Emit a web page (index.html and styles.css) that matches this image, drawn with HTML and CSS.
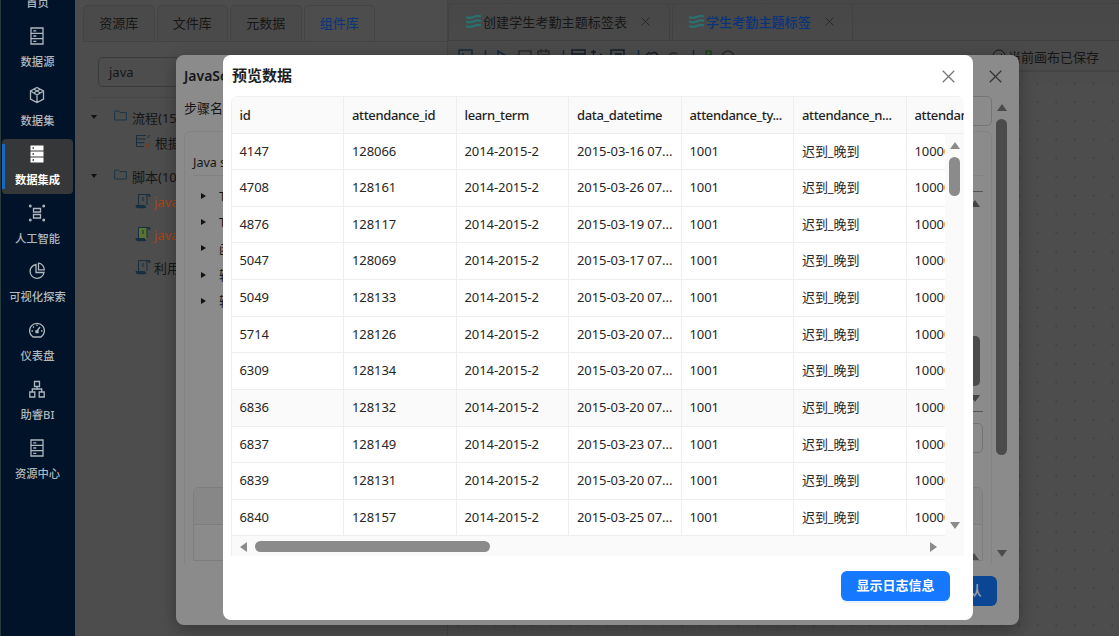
FILE: index.html
```html
<!DOCTYPE html>
<html>
	<head>
		<meta charset="UTF-8">
		<title>数据集成</title>
		<link rel="stylesheet" href="styles.css">
	</head>
	<body>
		<svg class="defs">
			<symbol id="i-server" viewBox="0 0 16 18"><path d="M2 1h12v16H2zM2 6.3h12M2 11.6h12M4.3 3.8h3M4.3 9h3M4.3 14.3h3"/></symbol>
			<symbol id="i-close" viewBox="0 0 12 12"><path d="M.7.7l10.6 10.6M11.3.7L.7 11.3"/></symbol>
			<symbol id="i-folder" viewBox="0 0 13 11"><path d="M.6 1h4l1.5 1.6h6.3V10H.6z"/></symbol>
			<symbol id="i-wave" viewBox="0 0 17 13"><path d="M1 2q3.500 1.800 7.500 0t7.500-.5M1 6.500q3.500 1.800 7.500 0t7.500-.5M1 11q3.500 1.800 7.500 0t7.500-.5"/></symbol>
			<symbol id="i-script" viewBox="0 0 16 16"><path class="paper" d="M4 1h8v12H4z"/><path class="line" d="M3.500 12V1.500h8.500V12M8 4v4"/><path class="roll" d="M11.500 1h3q1.300.8 1 3h-1.500l-.5-1.500h-2zM.5 12h9l2 2.500q-1 .8-2 .8H3Q.8 15.200.5 12z"/></symbol>
		</svg>
		<div class="sidebar">
			<ul>
				<li><svg><use href="#i-server"/></svg><span>首页</span></li>
				<li><svg viewBox="0 0 16 18"><use href="#i-server"/></svg><span>数据源</span></li>
				<li><svg viewBox="0 0 16 18"><path d="M8 1.500l6.500 3.500v8L8 16.500 1.500 13V5zM1.500 5L8 9l6.500-4M8 9v7.500M5 3.300l6 3.500M11 3.300L5 6.800"/></svg><span>数据集</span></li>
				<li class="select"><svg viewBox="0 0 16 18"><path class="solid" d="M1.500.5h13v5h-13zM1.500 6.500h13v5h-13zM1.500 12.500h13v5h-13z"/><path class="dots" d="M3.500 3h1.500M3.500 9h1.500M3.500 15h1.500"/></svg><span>数据集成</span></li>
				<li><svg viewBox="0 0 16 18"><path d="M4.500 4.500h7v3.500h-7zM4.500 10.500h7V14h-7z"/><circle cx="1.200" cy="2" r=".9"/><circle cx="14.800" cy="2" r=".9"/><circle cx="1.200" cy="16" r=".9"/><circle cx="14.800" cy="16" r=".9"/></svg><span>人工智能</span></li>
				<li><svg viewBox="0 0 16 18"><path d="M7 2.500a7 7 0 1 0 8 8H7zM9.500 1.200v6.600H15.300A6.500 6.500 0 0 0 9.500 1.200z"/></svg><span>可视化探索</span></li>
				<li><svg viewBox="0 0 16 18"><path d="M4 16a7.400 7.400 0 1 1 8 0zM7.500 10.500L11 6M8 3.500v1.500M4 5.500l1 1M2.500 10H4M12 10h1.500M7 10h2v1.500H7z"/></svg><span>仪表盘</span></li>
				<li><svg viewBox="0 0 16 18"><path d="M5.500 1.500h5v5h-5zM.8 12h5v5h-5zM10.200 12h5v5h-5zM8 6.500V9M3.300 12V9h9.400v3"/></svg><span>助睿BI</span></li>
				<li><svg viewBox="0 0 16 18"><use href="#i-server"/></svg><span>资源中心</span></li>
			</ul>
		</div>
		<div class="explorer">
			<ul class="lib-tabs">
				<li>资源库</li>
				<li>文件库</li>
				<li>元数据</li>
				<li class="select">组件库</li>
			</ul>
			<div class="search">java</div>
			<ul class="tree">
				<li class="dir"><i class="caret"></i><svg class="folder"><use href="#i-folder"/></svg>流程(15)</li>
				<li class="leaf"><svg class="script flow" viewBox="0 0 16 16"><path d="M11 1.500H1.500v11H9M1.500 5h9M1.500 8.700h8M12.500 4l2-3"/><path class="orange" d="M10 8.500l2 5.500 2.500-5"/></svg>根据</li>
				<li class="dir"><i class="caret"></i><svg class="folder"><use href="#i-folder"/></svg>脚本(10)</li>
				<li class="leaf hit"><svg class="script"><use href="#i-script"/></svg>java</li>
				<li class="leaf hit"><svg class="script green"><use href="#i-script"/></svg>java</li>
				<li class="leaf"><svg class="script"><use href="#i-script"/></svg>利用</li>
			</ul>
		</div>
		<div class="canvas">
			<ul class="file-tabs">
				<li><svg class="wave"><use href="#i-wave"/></svg><span>创建学生考勤主题标签表</span><svg class="close"><use href="#i-close"/></svg></li>
				<li class="select"><svg class="wave"><use href="#i-wave"/></svg><span>学生考勤主题标签</span><svg class="close"><use href="#i-close"/></svg></li>
			</ul>
			<div class="toolbar">
				<svg class="tools" viewBox="0 0 300 16">
					<path class="blue" d="M3 14V1h13v13M6 5h2M29.500 1v14M42 15V2l12 7M107.500 1v14M182.500 1v14"/>
					<path class="gray" d="M63 14V2h12v12M82 14V2h11v12M85 0v4M90 0v4M82 6h11"/>
					<path class="dark" d="M116 14V1h13v13M116 5h13M119 9h7M137.500 1v12M135 3h5M144 5l3 2M155 14V1h13v13M159 5h6v6h-6M190 6l4-3M194 5q6-4 8 2"/>
					<path class="gray" d="M213 6q5-4 8-1"/>
					<path class="blue" d="M237.500 1v14"/>
					<path class="green" d="M250 14V2h5v4h-3"/>
					<circle class="gray" cx="272" cy="8" r="6"/>
				</svg>
				<div class="saved"><svg viewBox="0 0 14 14"><circle cx="7" cy="7" r="6"/><path d="M4 7l2 2 4-4"/></svg>当前画布已保存</div>
			</div>
			<div class="grid"></div>
		</div>

		<!-- 组件配置弹窗 -->
		<div class="modal step">
			<div class="modal-tit"><h3>JavaScript代码</h3><svg class="close"><use href="#i-close"/></svg></div>
			<div class="step-body">
				<div class="step-con">
					<div class="field"><label>步骤名</label><div class="input"></div></div>
					<div class="panel">
						<div class="panel-tit">Java script</div>
						<div class="editor">
							<ul>
								<li>T</li>
								<li>T</li>
								<li>函</li>
								<li>输</li>
								<li>输</li>
							</ul>
							<div class="code"><i class="up"></i><b></b><i class="down"></i></div>
						</div>
						<div class="input wide"></div>
						<div class="fields"><div class="fields-tit"></div><div class="fields-row"><i class="up"></i></div></div>
					</div>
				</div>
				<div class="vbar"><i class="up"></i><b></b><i class="down"></i></div>
			</div>
			<div class="modal-foot"><a class="btn">确 认</a></div>
		</div>

		<!-- 预览数据弹窗 -->
		<div class="modal preview">
			<div class="modal-tit"><h3>预览数据</h3><svg class="close"><use href="#i-close"/></svg></div>
			<div class="table">
				<div class="row head"><span>id</span><span>attendance_id</span><span>learn_term</span><span>data_datetime</span><span>attendance_ty...</span><span>attendance_n...</span><span>attendance</span></div>
				<div class="table-body">
					<div class="rows">
						<div class="row"><span>4147</span><span>128066</span><span>2014-2015-2</span><span>2015-03-16 07...</span><span>1001</span><span>迟到_晚到</span><span>100000</span></div>
						<div class="row"><span>4708</span><span>128161</span><span>2014-2015-2</span><span>2015-03-26 07...</span><span>1001</span><span>迟到_晚到</span><span>100000</span></div>
						<div class="row"><span>4876</span><span>128117</span><span>2014-2015-2</span><span>2015-03-19 07...</span><span>1001</span><span>迟到_晚到</span><span>100000</span></div>
						<div class="row"><span>5047</span><span>128069</span><span>2014-2015-2</span><span>2015-03-17 07...</span><span>1001</span><span>迟到_晚到</span><span>100000</span></div>
						<div class="row"><span>5049</span><span>128133</span><span>2014-2015-2</span><span>2015-03-20 07...</span><span>1001</span><span>迟到_晚到</span><span>100000</span></div>
						<div class="row"><span>5714</span><span>128126</span><span>2014-2015-2</span><span>2015-03-20 07...</span><span>1001</span><span>迟到_晚到</span><span>100000</span></div>
						<div class="row"><span>6309</span><span>128134</span><span>2014-2015-2</span><span>2015-03-20 07...</span><span>1001</span><span>迟到_晚到</span><span>100000</span></div>
						<div class="row hover"><span>6836</span><span>128132</span><span>2014-2015-2</span><span>2015-03-20 07...</span><span>1001</span><span>迟到_晚到</span><span>100000</span></div>
						<div class="row"><span>6837</span><span>128149</span><span>2014-2015-2</span><span>2015-03-23 07...</span><span>1001</span><span>迟到_晚到</span><span>100000</span></div>
						<div class="row"><span>6839</span><span>128131</span><span>2014-2015-2</span><span>2015-03-20 07...</span><span>1001</span><span>迟到_晚到</span><span>100000</span></div>
						<div class="row"><span>6840</span><span>128157</span><span>2014-2015-2</span><span>2015-03-25 07...</span><span>1001</span><span>迟到_晚到</span><span>100000</span></div>
					</div>
					<div class="vbar"><i class="up"></i><b></b><i class="down"></i></div>
				</div>
				<div class="hbar"><i class="left"></i><b></b><i class="right"></i></div>
			</div>
			<div class="modal-foot"><a class="btn">显示日志信息</a></div>
		</div>
	</body>
</html>
```

FILE: styles.css
```css
*{
	margin:0;
	padding:0;
	list-style:none;
	box-sizing:border-box;
}
body{
	display:flex;
	width:1119px;
	height:636px;
	overflow:hidden;
	background:#4d4d4d;
	font-family:"Noto Sans","Noto Sans CJK SC",sans-serif;
	font-size:13px;
	color:#161616;
	white-space:nowrap;
}
svg{
	fill:none;
	stroke:currentColor;
	flex:none;
}
.defs{
	position:absolute;
	width:0;
	height:0;
}
/*左侧导航*/
.sidebar{
	flex:none;
	width:75px;
	height:636px;
	padding:0 2px 0 1px;
	overflow:hidden;
	background:#001329;
	border-left:1px solid #283a3c;
}
.sidebar ul{
	margin-top:-37.600px;
}
.sidebar li{
	display:flex;
	flex-direction:column;
	align-items:center;
	height:54.800px;
	margin-bottom:4px;
	padding-top:6px;
	border-radius:4px;
	color:#b0b8bf;
	font-size:11.300px;
	font-weight:500;
	line-height:16px;
}
.sidebar li svg{
	width:16px;
	height:18px;
	margin-bottom:9px;
	margin-right:1px;
	stroke-width:1.300;
}
.sidebar li.select{
	color:#fff;
	background:linear-gradient(#1668c0,#1668c0) 0 5px/3px 45px no-repeat #363738;
	font-weight:700;
}
.solid{
	fill:#fff;
	stroke:none;
}
.dots{
	stroke:#363738;
}
/*资源树*/
.explorer{
	flex:none;
	width:373px;
	padding:5px 0 0 8px;
	border-right:1px solid #434343;
}
.lib-tabs{
	display:flex;
	gap:2px;
	border-bottom:1px solid #444;
}
.lib-tabs li{
	width:71.500px;
	height:36px;
	line-height:34px;
	text-align:center;
	background:#4a4a4a;
	border:1px solid #444;
	border-bottom:0;
	border-radius:5px 5px 0 0;
}
.lib-tabs li.select{
	background:#4d4d4d;
	color:#07347a;
}
.search{
	width:260px;
	height:30px;
	margin:15px 0 10px 15px;
	padding-left:10px;
	border:1px solid #3b3b3b;
	border-radius:5px;
	line-height:28px;
}
.tree{
	margin-left:8px;
	padding-top:3px;
	border-top:1px solid #464646;
}
.tree li{
	display:flex;
	align-items:center;
}
.tree .dir{
	height:32px;
}
.tree .leaf{
	height:33px;
	padding-left:44px;
}
.tree .dir + .leaf{
	height:19px;
	margin-bottom:8px;
}
.tree .dir + .hit{
	margin-bottom:7px;
}
.tree .hit{
	color:#a8451b;
}
.caret{
	border:3.500px solid transparent;
	border-top:4px solid #111;
	border-bottom:0;
}
.folder{
	width:13px;
	height:11px;
	margin:0 5px 3px 17px;
	color:#1c3647;
}
.script{
	width:16px;
	height:16px;
	margin:0 3px 2px 0;
	color:#182f40;
}
.roll{
	fill:#182f40;
	stroke:none;
}
.line{
	fill:none;
}
.paper{
	stroke:none;
}
.green{
	fill:#5a7330;
}
.flow{
	margin-right:4px;
	fill:none;
}
.orange{
	stroke:#7a3d12;
}
/*画布*/
.canvas{
	display:flex;
	flex-direction:column;
	flex:1;
	padding-top:3px;
	background:linear-gradient(#474747,#4b4b4b 72px,#4d4d4d 90px);
}
.file-tabs{
	display:flex;
	gap:2px;
	height:38px;
	border-bottom:1px solid #404040;
	border-top:1px solid #434343;
}
.file-tabs li{
	display:flex;
	align-items:center;
	width:222px;
	padding:0 0 2px 16px;
	border-right:1px solid #414141;
	border-left:1px solid #414141;
	border-radius:5px 5px 0 0;
}
.file-tabs li.select{
	width:181px;
	padding-left:15px;
	color:#07347a;
	font-weight:500;
}
.file-tabs span{
	flex:none;
	letter-spacing:.1px;
}
.wave{
	width:17px;
	height:13px;
	margin-right:1px;
	color:#2a7070;
	stroke-width:2.200;
}
.close{
	width:13px;
	height:13px;
	stroke-width:1.200;
}
.file-tabs .close{
	width:9px;
	height:9px;
	margin-left:14px;
	color:#252525;
}
.toolbar{
	display:flex;
	justify-content:space-between;
	height:31px;
	padding:8px 20px 0 8px;
	border-bottom:2px solid #434444;
}
.tools{
	width:300px;
	height:16px;
	stroke-width:1.500;
}
.tools .blue{
	stroke:#142c40;
}
.tools .gray{
	stroke:#2c2c2c;
}
.tools .dark{
	stroke:#151e28;
}
.tools .green{
	fill:none;
	stroke:#174419;
}
.saved{
	display:flex;
	align-items:center;
	height:14px;
}
.saved svg{
	width:14px;
	height:14px;
	margin-right:2px;
}
.grid{
	flex:1;
	background:radial-gradient(circle,#414141 .9px,transparent 1.300px) 1px 2px/18.700px 18.700px;
}
/*弹窗*/
.modal{
	position:absolute;
	top:55px;
	border-radius:8px;
	overflow:hidden;
}
.modal-tit{
	display:flex;
	justify-content:space-between;
	align-items:center;
	height:41px;
}
.modal-tit h3{
	margin-top:-2px;
}
.modal-tit .close{
	margin:1px 9px 0 0;
}
.modal-foot{
	display:flex;
	justify-content:flex-end;
}
.btn{
	height:30px;
	padding:0 15.500px;
	border-radius:6px;
	line-height:29px;
	font-weight:700;
}
.up,.down,.left,.right{
	flex:none;
	border:5px solid transparent;
}
.up{
	border-top:0;
	border-bottom:7px solid currentColor;
}
.down{
	border-bottom:0;
	border-top:7px solid currentColor;
}
.left{
	border-left:0;
	border-right:7px solid currentColor;
}
.right{
	border-right:0;
	border-left:7px solid currentColor;
}
.vbar{
	display:flex;
	flex-direction:column;
	align-items:center;
	flex:none;
}
.vbar b,.hbar b{
	display:block;
	width:11px;
	border-radius:6px;
	background:currentColor;
}
.vbar .down{
	margin-top:auto;
}
/*组件配置*/
.step{
	left:176px;
	width:843px;
	height:570px;
	padding:0 8px;
	background:#8b8b8b;
	box-shadow:0 5px 16px rgba(0,0,0,.3);
}
.step h3{
	font-size:14px;
	font-weight:600;
}
.step .close{
	color:#353535;
}
.step-body{
	display:flex;
	height:468px;
	overflow:hidden;
}
.step-con{
	width:808px;
	height:468px;
}
.field{
	display:flex;
	height:30px;
	line-height:25px;
}
.input{
	flex:1;
	height:30px;
	margin-left:10px;
	border:1px solid #747474;
	border-radius:5px;
}
.panel{
	height:460px;
	margin-top:5px;
	padding:0 8px;
	border:1px solid #828282;
	border-radius:6px;
}
.panel-tit{
	height:44px;
	line-height:61px;
	font-size:12.500px;
	border-bottom:1px solid #828282;
}
.editor{
	display:flex;
	justify-content:space-between;
	height:236px;
}
.editor ul{
	padding:7px 0 0 8px;
}
.editor li{
	display:flex;
	align-items:center;
	height:26.200px;
}
.editor li:before{
	content:"";
	margin-right:13px;
	border:3.500px solid transparent;
	border-left:5px solid #111;
	border-right:0;
}
.code{
	display:flex;
	flex-direction:column;
	align-items:flex-end;
	width:600px;
	margin-top:15px;
	padding:8px 3px 0 0;
	border-top:1px solid #555;
	border-bottom:1px solid #555;
	color:#444;
}
.code b{
	width:11px;
	height:50px;
	margin-top:129px;
	border-radius:5px;
	background:#4b4b4b;
}
.code .down{
	margin-top:9px;
}
.wide{
	margin:11px 0 34px 90px;
}
.fields{
	border:1px solid #7d7d7d;
	border-radius:6px 6px 0 0;
}
.fields-tit{
	height:37px;
	background:#878787;
	border-bottom:1px solid #7d7d7d;
}
.fields-row{
	display:flex;
	justify-content:flex-end;
	height:35px;
	padding:8px 3px 0 0;
	color:#4b4b4b;
}
.step .vbar{
	width:19px;
	padding:8px 0 7px;
	color:#4b4b4b;
}
.step .vbar b{
	height:336px;
	margin-top:8px;
}
.step .modal-foot{
	padding:12px 14px 0 0;
}
.step .btn{
	background:#0b4694;
	color:#949ca8;
}
/*预览数据*/
.preview{
	left:223px;
	width:750px;
	height:565px;
	padding:0 9px 0 8px;
	background:#fff;
	color:#262626;
}
.preview h3{
	padding-left:1px;
	font-size:15px;
	font-weight:700;
	color:#1f1f1f;
}
.preview .close{
	color:#777;
}
.table{
	height:460px;
	border-left:1px solid #efefef;
	border-radius:7px 7px 0 0;
	overflow:hidden;
	background:#fafafa;
}
.row{
	display:flex;
	width:787.500px;
	height:36.640px;
	background:#fff;
	border-bottom:1px solid #eee;
}
.row span{
	flex:none;
	width:112.500px;
	padding-left:8px;
	border-right:1px solid #eee;
	line-height:35.400px;
	letter-spacing:-.08px;
}
.row span:first-child{
	width:112px;
	padding-left:7.500px;
}
.row.head{
	height:37.500px;
	background:#fafafa;
	border-top:1px solid #f0f0f0;
	font-weight:500;
	color:#1f1f1f;
}
.row.head span{
	line-height:37px;
	letter-spacing:-.35px;
}
.row.hover{
	background:#fafafa;
}
.table-body{
	display:flex;
	height:403px;
}
.rows{
	width:713px;
	overflow:hidden;
}
.table .vbar{
	width:19px;
	padding:8px 0 8px;
	color:#8b8b8b;
}
.table .vbar b{
	height:39px;
	margin-top:8px;
}
.hbar{
	display:flex;
	align-items:center;
	height:20px;
	padding:0 27px 0 8px;
	color:#8b8b8b;
}
.hbar b{
	width:235px;
	height:11px;
	margin-left:8px;
}
.hbar .right{
	margin-left:auto;
}
.preview .modal-foot{
	padding:15px 14px 0 0;
}
.preview .btn{
	background:#1677ff;
	color:#fff;
	box-shadow:0 2px 0 rgba(5,145,255,.1);
}
```
